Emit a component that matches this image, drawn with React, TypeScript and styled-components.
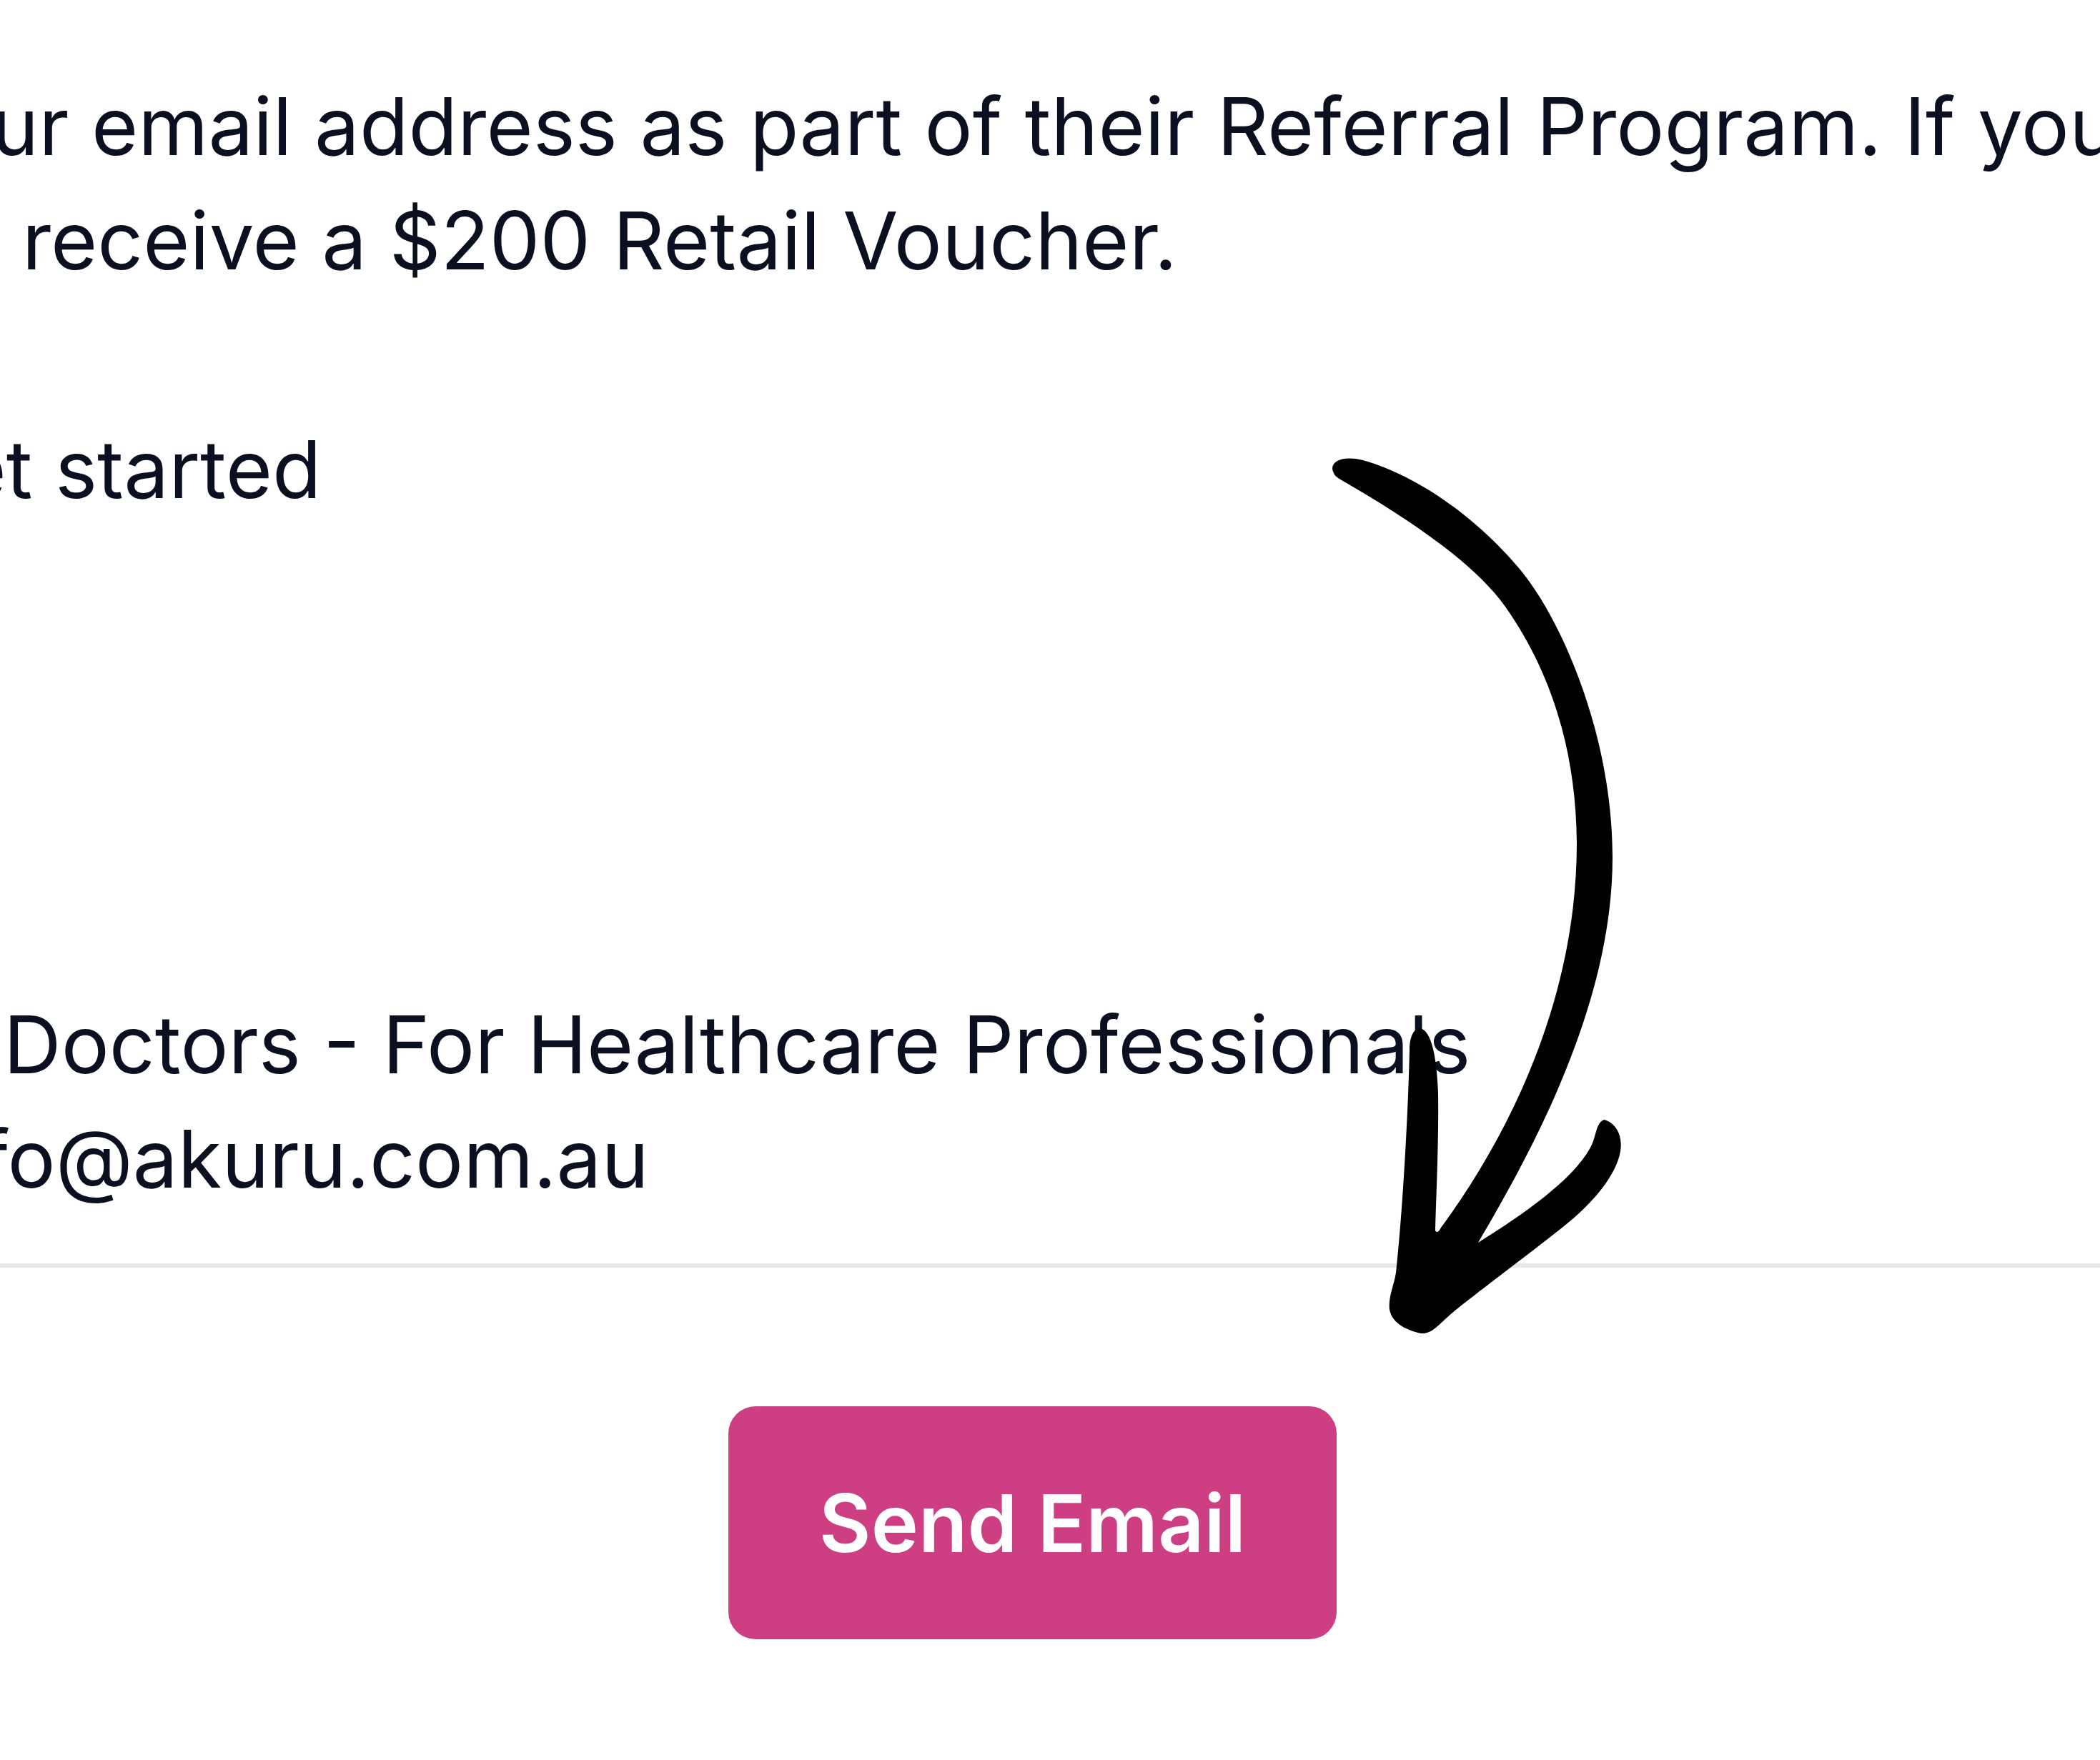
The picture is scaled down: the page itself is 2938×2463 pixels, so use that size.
import React from 'react'
import styled, { createGlobalStyle } from 'styled-components'

const GlobalStyle = createGlobalStyle`
  html, body {
    margin: 0;
    padding: 0;
    background: #ffffff;
  }
  body {
    overflow: hidden;
    font-family: Inter, "Noto Sans", "Liberation Sans", sans-serif;
    -webkit-font-smoothing: antialiased;
  }
`

// hand-drawn pointer from the preview down to the send button
const POINTER_PATH = `
  M 1866 662
  C 1858 648, 1875 636, 1907 644
  C 1990 668, 2070 730, 2125 795
  C 2185 866, 2256 1030, 2256 1200
  C 2256 1400, 2150 1600, 2068 1739
  C 2130 1700, 2200 1652, 2225 1606
  C 2234 1590, 2232 1572, 2244 1567
  C 2258 1570, 2271 1586, 2267 1611
  C 2262 1642, 2232 1682, 2183 1720
  C 2130 1762, 2062 1812, 2031 1838
  C 2012 1854, 2004 1867, 1988 1866
  C 1970 1862, 1948 1853, 1944 1833
  C 1942 1815, 1950 1800, 1953 1781
  C 1962 1700, 1970 1560, 1972 1470
  C 1972 1450, 1978 1440, 1986 1439
  C 2000 1440, 2010 1470, 2012 1530
  C 2013 1600, 2009 1680, 2008 1722
  C 2010 1726, 2013 1724, 2016 1718
  C 2110 1590, 2206 1400, 2206 1180
  C 2205 1050, 2170 940, 2106 849
  C 2060 784, 1960 720, 1877 672
  C 1870 668, 1867 665, 1866 662 Z
`

const App = () => {
  return (
    <>
      <GlobalStyle />
      <Page>
        <Preview>
          <TextLine $shift={-274}>to your email address as part of their Referral Program. If you sign up,</TextLine>
          <TextLine $shift={-280}>you’ll receive a $200 Retail Voucher.</TextLine>
          <Heading $shift={-140}>Get started</Heading>
          <Footer>
            <TextLine $shift={-340}>Akuru Doctors - For Healthcare Professionals</TextLine>
            <TextLine $shift={-121}>info@akuru.com.au</TextLine>
          </Footer>
        </Preview>
        <Divider />
        <Actions>
          <SendButton type="button">Send Email</SendButton>
        </Actions>
        <Pointer viewBox="0 0 2938 2463" aria-hidden="true">
          <path d={POINTER_PATH} fill="#000" />
        </Pointer>
      </Page>
    </>
  )
}

export default App

const Page = styled.main`
  position: relative;
  width: 2938px;
  height: 2463px;
  overflow: hidden;
  background: #ffffff;
  color: #0b1020;

  display: flex;
  flex-direction: column;
`

const Preview = styled.section`
  padding-top: 96px;
  display: flex;
  flex-direction: column;
`

const TextLine = styled.p<{ $shift: number }>`
  margin: 0 0 0 ${props => props.$shift}px;
  font-size: 112px;
  font-weight: 400;
  line-height: 160px;
  white-space: nowrap;
`

const Heading = styled.h2<{ $shift: number }>`
  margin: 160px 0 0 ${props => props.$shift}px;
  font-size: 112px;
  font-weight: 400;
  line-height: 160px;
  white-space: nowrap;
`

const Footer = styled.div`
  margin-top: 645px;
  display: flex;
  flex-direction: column;
`

const Divider = styled.hr`
  margin: 67px 0 0;
  border: 0;
  height: 6px;
  background: #e5e7eb;
`

const Actions = styled.div`
  margin-top: 194px;
  padding-right: 49px;
  display: flex;
  justify-content: center;
`

const SendButton = styled.button`
  width: 851px;
  height: 326px;
  border: 0;
  border-radius: 38px;
  background: #cd3f82;
  color: #ffffff;
  font-family: Inter, "Noto Sans", sans-serif;
  font-size: 112px;
  font-weight: 600;
  cursor: pointer;
`

const Pointer = styled.svg`
  position: absolute;
  top: 0;
  left: 0;
  width: 2938px;
  height: 2463px;
  pointer-events: none;
`
